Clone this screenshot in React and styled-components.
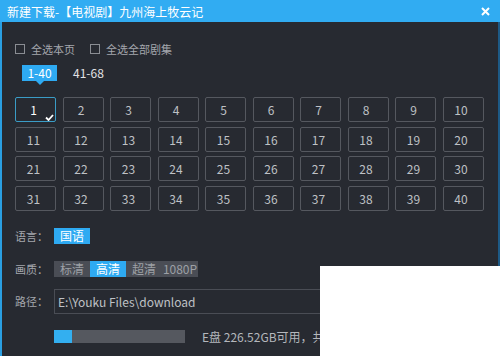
import React from 'react';
import styled, { createGlobalStyle } from 'styled-components';

const GlobalStyle = createGlobalStyle`
  html, body {
    margin: 0;
    padding: 0;
    background: #ffffff;
  }
  body {
    font-family: "Noto Sans CJK SC", "Noto Sans", sans-serif;
  }
`;

const Window = styled.div`
  position: relative;
  width: 500px;
  height: 356px;
  overflow: hidden;
  display: flex;
  flex-direction: column;
  background: #272a31;
  font-size: 12px;
  color: #c9cbcf;
`;

const TitleBar = styled.div`
  height: 22px;
  flex: none;
  background: #31acf2;
  display: flex;
  align-items: center;
  justify-content: space-between;
  padding: 0 7px;
  color: #ffffff;
  font-size: 12px;
`;

const Close = styled.span`
  display: flex;
  align-items: center;
  margin-right: 3px;
`;

const Body = styled.div`
  flex: 1;
  border-left: 2px solid #2a9fe2;
  border-right: 2px solid #1d5a86;
  padding: 0 0 0 13px;
`;

const CheckRow = styled.div`
  display: flex;
  align-items: center;
  gap: 15px;
  margin-top: 22px;
  height: 10px;
`;

const CheckItem = styled.label`
  display: flex;
  align-items: center;
  gap: 6px;
  color: #a4a7ad;
  font-size: 11px;
`;

const Box = styled.span`
  width: 8px;
  height: 8px;
  border: 1px solid #8a8d93;
`;

const Tabs = styled.div`
  display: flex;
  align-items: center;
  gap: 16px;
  margin-top: 11px;
  padding-left: 7px;
`;

const Tab = styled.span`
  position: relative;
  height: 16px;
  line-height: 16px;
  width: ${p => (p.$active ? '35px' : 'auto')};
  text-align: center;
  background: ${p => (p.$active ? '#2eaaf2' : 'transparent')};
  color: ${p => (p.$active ? '#ffffff' : '#e0e2e5')};
  font-size: 12px;

  &::after {
    content: '';
    display: ${p => (p.$active ? 'block' : 'none')};
    position: absolute;
    left: 50%;
    bottom: -4px;
    margin-left: -4px;
    border-left: 4px solid transparent;
    border-right: 4px solid transparent;
    border-top: 4px solid #2eaaf2;
  }
`;

const Grid = styled.div`
  display: grid;
  grid-template-columns: repeat(10, 41px);
  grid-auto-rows: 25px;
  column-gap: 6.5px;
  row-gap: 4.6px;
  margin-top: 16px;
`;

const Cell = styled.div`
  position: relative;
  box-sizing: border-box;
  border: 1px solid ${p => (p.$selected ? '#3a9cc6' : '#55585f')};
  border-radius: 2px;
  display: flex;
  align-items: center;
  justify-content: center;
  padding-right: 4px;
  color: ${p => (p.$selected ? '#ffffff' : '#bfc1c5')};
  font-size: 12px;
`;

const Tick = styled.svg`
  position: absolute;
  right: 1px;
  bottom: 0px;
`;

const OptionRow = styled.div`
  display: flex;
  align-items: center;
  margin-top: ${p => p.$top || 0}px;
`;

const Label = styled.span`
  width: 39px;
  color: #a4a7ad;
  font-size: 11px;
`;

const Segment = styled.div`
  display: flex;
  background: ${p => (p.$filled ? '#4a4d55' : 'transparent')};
`;

const SegItem = styled.span`
  width: 36px;
  height: 16px;
  line-height: 16px;
  text-align: center;
  background: ${p => (p.$active ? '#2eaaf2' : 'transparent')};
  color: ${p => (p.$active ? '#ffffff' : '#9da0a6')};
  font-size: 12px;
`;

const PathInput = styled.div`
  box-sizing: border-box;
  width: 433px;
  height: 25px;
  border: 1px solid #4a4d55;
  display: flex;
  align-items: center;
  padding-left: 3px;
  color: #bfc1c5;
  font-size: 12px;
`;

const Track = styled.div`
  width: 131px;
  height: 13px;
  background: #55585f;
  margin-left: 39px;
`;

const Fill = styled.div`
  height: 100%;
  background: #33aff0;
`;

const DiskText = styled.span`
  margin-left: 17px;
  color: #b4b7bc;
  font-size: 12px;
  white-space: nowrap;
`;

const Cutout = styled.div`
  position: absolute;
  left: 320px;
  top: 266px;
  right: 0;
  bottom: 0;
  background: #ffffff;
`;

const numbers = Array.from({ length: 40 }, (_, i) => i + 1);

export default function App() {
  return (
    <>
      <GlobalStyle />
      <Window>
        <TitleBar>
          <span>新建下载-【电视剧】九州海上牧云记</span>
          <Close>
            <svg width="9" height="9" viewBox="0 0 9 9">
              <path d="M1 1 L8 8 M8 1 L1 8" stroke="#ffffff" strokeWidth="2" />
            </svg>
          </Close>
        </TitleBar>
        <Body>
          <CheckRow>
            <CheckItem><Box />全选本页</CheckItem>
            <CheckItem><Box />全选全部剧集</CheckItem>
          </CheckRow>
          <Tabs>
            <Tab $active>1-40</Tab>
            <Tab>41-68</Tab>
          </Tabs>
          <Grid>
            {numbers.map(n => (
              <Cell key={n} $selected={n === 1}>
                {n}
                {n === 1 && (
                  <Tick width="9" height="7" viewBox="0 0 9 7">
                    <path d="M1 3.5 L3.5 6 L8 1" stroke="#ffffff" strokeWidth="1.8" fill="none" />
                  </Tick>
                )}
              </Cell>
            ))}
          </Grid>
          <OptionRow $top={17}>
            <Label>语言：</Label>
            <Segment>
              <SegItem $active>国语</SegItem>
            </Segment>
          </OptionRow>
          <OptionRow $top={17}>
            <Label>画质：</Label>
            <Segment $filled>
              <SegItem>标清</SegItem>
              <SegItem $active>高清</SegItem>
              <SegItem>超清</SegItem>
              <SegItem>1080P</SegItem>
            </Segment>
          </OptionRow>
          <OptionRow $top={12}>
            <Label>路径：</Label>
            <PathInput>E:\Youku Files\download</PathInput>
          </OptionRow>
          <OptionRow $top={14}>
            <Track>
              <Fill style={{ width: '14%' }} />
            </Track>
            <DiskText>E盘 226.52GB可用，共263.00GB</DiskText>
          </OptionRow>
        </Body>
        <Cutout />
      </Window>
    </>
  );
}
